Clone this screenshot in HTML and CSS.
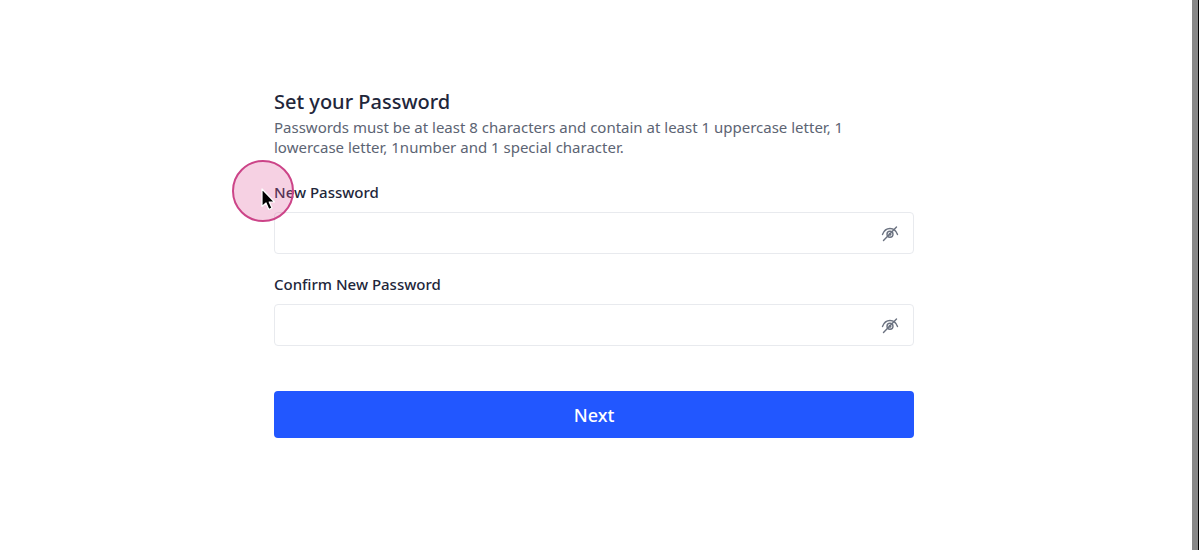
FILE: index.html
```html
<!DOCTYPE html>
<html lang="en">
<head>
  <meta charset="UTF-8">
  <meta name="viewport" content="width=device-width, initial-scale=1.0">
  <title>Set your Password</title>
  <link rel="stylesheet" href="styles.css">
</head>
<body>
  <main class="page">
    <form class="password-form">
      <h1>Set your Password</h1>
      <p class="hint">Passwords must be at least 8 characters and contain at least 1 uppercase letter, 1 lowercase letter, 1number and 1 special character.</p>

      <div class="field">
        <label for="new-password">New Password</label>
        <div class="input-box">
          <input type="password" id="new-password" autocomplete="new-password">
          <button type="button" class="toggle" aria-label="Show password">
            <svg viewBox="0 0 18 18" width="18" height="18">
              <path d="M1.500 10.500C3 6.500 6 4.500 9 4.500S15 6.500 16.500 10.500"/>
              <circle cx="9" cy="10.200" r="3"/>
              <circle cx="9" cy="10.200" r="0.800"/>
              <path d="M2.500 16.500L15.500 3"/>
            </svg>
          </button>
        </div>
      </div>

      <div class="field">
        <label for="confirm-password">Confirm New Password</label>
        <div class="input-box">
          <input type="password" id="confirm-password" autocomplete="new-password">
          <button type="button" class="toggle" aria-label="Show password">
            <svg viewBox="0 0 18 18" width="18" height="18">
              <path d="M1.500 10.500C3 6.500 6 4.500 9 4.500S15 6.500 16.500 10.500"/>
              <circle cx="9" cy="10.200" r="3"/>
              <circle cx="9" cy="10.200" r="0.800"/>
              <path d="M2.500 16.500L15.500 3"/>
            </svg>
          </button>
        </div>
      </div>

      <button type="submit" class="next">Next</button>
    </form>
  </main>
  <div class="edge"></div>

  <!-- click highlight with the mouse pointer -->
  <div class="pointer">
    <svg viewBox="0 0 62 62" width="62" height="62">
      <circle cx="31" cy="31" r="30" fill="#e05a9c" fill-opacity="0.28" stroke="#cc4488" stroke-width="2"/>
      <path d="M30 29V46.500L34 43L36.800 49.500L40 48L37.200 42H42.500Z" fill="#000" stroke="#fff" stroke-width="1.200" stroke-linejoin="round"/>
    </svg>
  </div>
</body>
</html>
```

FILE: styles.css
```css
* {
  box-sizing: border-box;
}
body {
  display: flex;
  min-height: 100vh;
  margin: 0;
  background: #fff;
  font-family: "Noto Sans", sans-serif;
  color: #22263a;
}
.page {
  flex: 1;
  padding: 87px 4px 40px 0;
}
.password-form {
  max-width: 640px;
  margin: 0 auto;
}
h1 {
  margin: 0;
  font-size: 20px;
  font-weight: 500;
  line-height: 30px;
}
.hint {
  margin: 0 0 24px;
  font-size: 15px;
  line-height: 20px;
  color: #5c6473;
}
.field {
  margin-bottom: 19px;
}
.field label {
  display: block;
  margin-bottom: 9px;
  font-size: 15px;
  font-weight: 500;
  line-height: 22px;
}
.input-box {
  display: flex;
  align-items: center;
  height: 42px;
  border: 1px solid #e8eaee;
  border-radius: 4px;
}
.input-box input {
  flex: 1;
  min-width: 0;
  height: 100%;
  padding: 0 12px;
  border: none;
  outline: none;
  background: none;
  font: inherit;
}
.toggle {
  display: flex;
  margin-right: 14px;
  padding: 0;
  border: none;
  background: none;
  cursor: pointer;
}
.toggle svg {
  fill: none;
  stroke: #6b7280;
  stroke-width: 1.4;
  stroke-linecap: round;
}
.next {
  display: block;
  width: 100%;
  height: 47px;
  margin-top: 45px;
  border: none;
  border-radius: 4px;
  background: #2257ff;
  color: #fff;
  font-family: inherit;
  font-size: 18px;
  font-weight: 500;
  cursor: pointer;
}
.edge {
  width: 7px;
  border-right: 1px solid #000;
  background: #888;
}
.pointer {
  position: absolute;
  top: 160px;
  left: 232px;
  pointer-events: none;
}
.pointer svg {
  display: block;
}
```
